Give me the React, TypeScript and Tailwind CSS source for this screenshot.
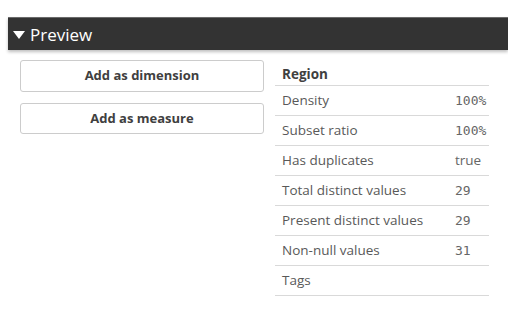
import React from 'react';

const rows: { label: string; value: string; mono?: boolean }[] = [
  { label: 'Density', value: '100%', mono: true },
  { label: 'Subset ratio', value: '100%', mono: true },
  { label: 'Has duplicates', value: 'true' },
  { label: 'Total distinct values', value: '29', mono: true },
  { label: 'Present distinct values', value: '29', mono: true },
  { label: 'Non-null values', value: '31', mono: true },
  { label: 'Tags', value: '' },
];

const App: React.FC = () => {
  return (
    <div className="w-[508px] h-[328px] bg-white overflow-hidden font-['Open_Sans',sans-serif]">
      <div className="h-[17px]" />
      <div className="ml-[8px] h-[33px] bg-[#333333] border-t border-[#6a6a6a] shadow-[0_2px_3px_rgba(0,0,0,0.25)] flex items-center pl-[5px]">
        <svg width="12" height="10" viewBox="0 0 12 10" className="mr-[5px] mt-[1px]">
          <path d="M0 1 L12 1 L6 9 Z" fill="#ffffff" />
        </svg>
        <span className="text-white text-[17px] leading-none">Preview</span>
      </div>
      <div className="flex pl-[20px] pt-[5px] gap-[11px]">
        <div className="w-[244px] flex flex-col gap-[11px] pt-[5px]">
          <button className="h-[32px] rounded-[3px] border border-[#cccccc] bg-white text-[13px] font-bold text-[#404040]">
            Add as dimension
          </button>
          <button className="h-[31px] rounded-[3px] border border-[#cccccc] bg-white text-[13px] font-bold text-[#404040]">
            Add as measure
          </button>
        </div>
        <div className="w-[214px] pt-[1px]">
          <div className="h-[30px] border-b border-[#d9d9d9] flex items-center pl-[7px] pt-[8px] text-[13.5px] font-bold text-[#404040]">
            Region
          </div>
          {rows.map((r) => (
            <div key={r.label} className="h-[30px] border-b border-[#d9d9d9] flex items-center pl-[7px] text-[13.5px] text-[#595959]">
              <span className="w-[173px]">{r.label}</span>
              <span className={r.mono ? "font-['DejaVu_Sans_Mono',monospace] text-[13px] text-[#666666]" : 'text-[#666666]'}>{r.value}</span>
            </div>
          ))}
        </div>
      </div>
    </div>
  );
};

export default App;
